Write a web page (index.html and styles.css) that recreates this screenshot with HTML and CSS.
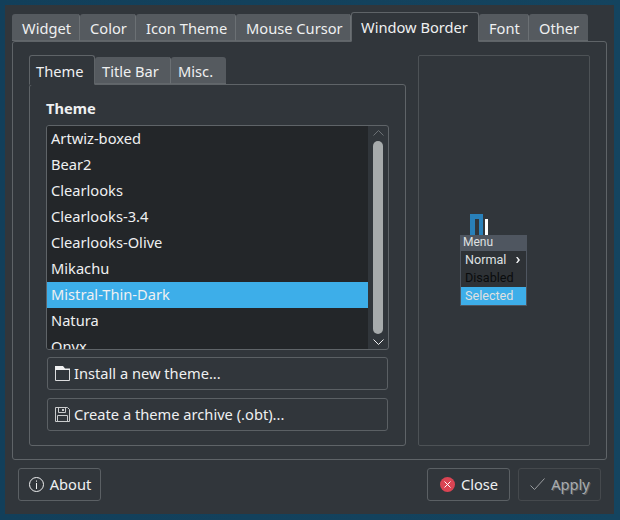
FILE: index.html
```html
<!DOCTYPE html>
<html lang="en">
<head>
    <meta charset="UTF-8">
    <title>Obconf</title>
    <link rel="stylesheet" href="styles.css">
</head>
<body>
    <div class="window">
        <div class="tabs outer-tabs">
            <div class="tab">Widget</div>
            <div class="tab">Color</div>
            <div class="tab">Icon Theme</div>
            <div class="tab">Mouse Cursor</div>
            <div class="tab active">Window Border</div>
            <div class="tab">Font</div>
            <div class="tab">Other</div>
        </div>
        <div class="pane outer-pane">
            <div class="left-col">
                <div class="tabs inner-tabs">
                    <div class="tab active">Theme</div>
                    <div class="tab">Title Bar</div>
                    <div class="tab">Misc.</div>
                </div>
                <div class="pane inner-pane">
                    <div class="section-title">Theme</div>
                    <div class="list">
                        <div class="rows">
                            <div class="row">Artwiz-boxed</div>
                            <div class="row">Bear2</div>
                            <div class="row">Clearlooks</div>
                            <div class="row">Clearlooks-3.4</div>
                            <div class="row">Clearlooks-Olive</div>
                            <div class="row">Mikachu</div>
                            <div class="row selected">Mistral-Thin-Dark</div>
                            <div class="row">Natura</div>
                            <div class="row">Onyx</div>
                        </div>
                        <div class="scrollbar">
                            <svg class="arrow" width="11" height="6" viewBox="0 0 11 6"><path d="M0.5 5.5 L5.5 0.5 L10.5 5.5" fill="none" stroke="#6b7074"/></svg>
                            <div class="thumb"></div>
                            <svg class="arrow" width="11" height="6" viewBox="0 0 11 6"><path d="M0.5 0.5 L5.5 5.5 L10.5 0.5" fill="none" stroke="#eff0f1"/></svg>
                        </div>
                    </div>
                    <button class="btn wide">
                        <svg width="15" height="15" viewBox="0 0 15 15"><path d="M0.5 1 V14.5 H14.5 V3" fill="none" stroke="#dcddde"/><path d="M0 0 H8 L10 2.5 H15 V4 H0 Z" fill="#eff0f1"/></svg>
                        Install a new theme...
                    </button>
                    <button class="btn wide">
                        <svg width="15" height="15" viewBox="0 0 15 15"><path d="M0.5 0.5 H12.5 L14.5 2.5 V14.5 H0.5 Z" fill="none" stroke="#c9cbcc"/><path d="M3.5 1 V5.5 H10.5 V1 M2.5 14 V8.5 H12.5 V14" fill="none" stroke="#c9cbcc"/><rect x="7" y="2" width="2" height="2" fill="#c9cbcc"/></svg>
                        Create a theme archive (.obt)...
                    </button>
                </div>
            </div>
            <div class="preview">
                <div class="mini">
                    <div class="mini-icons">
                        <div class="mini-blue"></div>
                        <div class="mini-white"></div>
                    </div>
                    <div class="mini-menu">
                        <div class="mini-title">Menu</div>
                        <div class="mini-item">Normal<span class="mini-sub"></span></div>
                        <div class="mini-item disabled">Disabled</div>
                        <div class="mini-item picked">Selected</div>
                    </div>
                </div>
            </div>
        </div>
        <div class="footer">
            <button class="btn">
                <svg width="15" height="15" viewBox="0 0 15 15"><circle cx="7.5" cy="7.5" r="7" fill="none" stroke="#eff0f1"/><path d="M7.5 6 V12" stroke="#eff0f1"/><rect x="7" y="3.5" width="1" height="1.2" fill="#eff0f1"/></svg>
                About
            </button>
            <div class="spacer"></div>
            <button class="btn">
                <svg width="15" height="15" viewBox="0 0 15 15"><circle cx="7.5" cy="7.5" r="7.5" fill="#da4453"/><path d="M4.5 4.5 L10.5 10.5 M10.5 4.5 L4.5 10.5" stroke="#fff"/></svg>
                Close
            </button>
            <button class="btn apply">
                <svg width="15" height="13" viewBox="0 0 15 13"><path d="M0.5 7.5 L4.5 11.5 L14.5 0.5" fill="none" stroke="#9a9da0"/></svg>
                <span class="apply-label">Apply</span>
            </button>
        </div>
    </div>
</body>
</html>
```

FILE: styles.css
```css
* {
    box-sizing: border-box;
}

html, body {
    margin: 0;
    height: 100%;
}

body {
    width: 620px;
    height: 520px;
    padding: 5px 6px 6px 5px;
    overflow: hidden;
    background: linear-gradient(90deg, #123f5a, #14445f);
    color: #eff0f1;
    font-family: "Noto Sans", sans-serif;
    font-size: 14.67px;
}

.window {
    height: 100%;
    padding: 9px 7px 0 7px;
    background-color: #31363b;
    display: flex;
    flex-direction: column;
}

.tabs {
    display: flex;
    align-items: flex-end;
    position: relative;
    z-index: 1;
}

.tab {
    height: 27px;
    padding: 0 10px;
    line-height: 28px;
    background-color: #555a5f;
    border-right: 1px solid #6b7074;
    border-radius: 3px 3px 0 0;
    border-bottom: 1px solid #62676b;
    white-space: nowrap;
}

.tab:last-child {
    border-right: none;
}

.tab.active {
    height: 30px;
    padding-left: 9px;
    line-height: 29px;
    background-color: #31363b;
    border: 1px solid #5f6468;
    border-bottom: 1px solid #31363b;
    margin-bottom: -1px;
}

.outer-tabs {
    height: 27px;
}

.outer-tabs .tab:nth-child(1) { width: 68px; }
.outer-tabs .tab:nth-child(2) { width: 56px; }
.outer-tabs .tab:nth-child(3) { width: 100px; }
.outer-tabs .tab:nth-child(4) { width: 115px; }
.outer-tabs .tab:nth-child(5) { width: 128px; }
.outer-tabs .tab:nth-child(6) { width: 50px; }
.outer-tabs .tab:nth-child(7) { width: 59px; }

.pane {
    border: 1px solid #5f6468;
    border-radius: 3px;
}

.outer-pane {
    width: 595px;
    height: 419px;
    padding: 13px 16px;
    display: flex;
    gap: 12px;
}

.left-col {
    width: 377px;
    display: flex;
    flex-direction: column;
}

.inner-tabs {
    height: 29px;
}

.inner-tabs .tab {
    padding: 0 7px;
}

.inner-tabs .tab.active {
    width: 66px;
    padding-left: 6px;
    line-height: 30px;
}

.inner-tabs .tab:nth-child(2) { width: 76px; }
.inner-tabs .tab:nth-child(3) { width: 55px; }

.inner-pane {
    flex: 1;
    padding: 15px 17px 13px 16px;
}

.section-title {
    font-weight: bold;
    height: 25px;
    line-height: 17px;
}

.list {
    width: 343px;
    height: 225px;
    border: 1px solid #5f6468;
    border-radius: 3px;
    display: flex;
    overflow: hidden;
    background-color: #31363b;
}

.rows {
    width: 321px;
    background-color: #232629;
    overflow: hidden;
}

.row {
    height: 26px;
    line-height: 24px;
    padding-left: 4px;
}

.row.selected {
    background-color: #3daee9;
}

.scrollbar {
    flex: 1;
    padding-top: 4px;
    display: flex;
    flex-direction: column;
    align-items: center;
}

.arrow {
    display: block;
}

.thumb {
    width: 10px;
    height: 193px;
    margin: 5px 0;
    border-radius: 5px;
    background-color: #a7abac;
}

.btn {
    height: 33px;
    padding: 0 12px 2px;
    background-color: #31363b;
    color: #eff0f1;
    border: 1px solid #5b6064;
    border-radius: 3px;
    font-family: "Noto Sans", sans-serif;
    font-size: 14.67px;
    display: flex;
    align-items: center;
    gap: 4px;
}

.btn svg {
    margin-top: 2px;
}

.btn.wide {
    width: 341px;
    margin-top: 8px;
    margin-left: 1px;
    padding-left: 7px;
}

.list + .btn.wide {
    margin-top: 7px;
}

.preview {
    width: 172px;
    border: 1px solid #4d5256;
    border-radius: 2px;
    display: flex;
    align-items: center;
    justify-content: center;
    padding: 19px 21px 0 0;
}

.mini {
    width: 67px;
    font-family: Roboto, sans-serif;
    font-size: 12px;
}

.mini-icons {
    height: 21px;
    display: flex;
    align-items: flex-end;
    padding-left: 10px;
    gap: 2px;
}

.mini-blue {
    width: 13px;
    height: 21px;
    border: solid #2980b9;
    border-width: 5px 4px 0 5px;
    background-color: #31363b;
}

.mini-white {
    width: 3px;
    height: 16px;
    background-color: #fff;
}

.mini-menu {
    border: 1px solid #4f5660;
    background-color: #2e3236;
}

.mini-title {
    height: 16px;
    line-height: 15px;
    margin: -1px -1px 0;
    padding-left: 3px;
    background-color: #4f5660;
    color: #dfe0e1;
}

.mini-item {
    height: 18px;
    line-height: 17px;
    padding-left: 4px;
    font-size: 12.6px;
    color: #dfe0e1;
    position: relative;
}

.mini-sub {
    position: absolute;
    right: 6px;
    top: 6px;
    width: 4px;
    height: 6px;
    background-color: #eff0f1;
    clip-path: polygon(0 0, 40% 0, 100% 50%, 40% 100%, 0 100%, 50% 50%);
}

.mini-item.disabled {
    color: #0a0c0d;
}

.mini-item.picked {
    background-color: #3daee9;
}

.footer {
    display: flex;
    gap: 8px;
    margin-top: 8px;
    padding: 0 6px;
}

.spacer {
    flex: 1;
}

.footer .btn {
    width: 83px;
    justify-content: center;
    padding: 0 0 2px 1px;
    gap: 6px;
}

.btn.apply {
    border-color: #45494d;
    color: #a9acae;
}

.apply-label {
    text-shadow: 1px 1px 0 #5a5e62;
}
```
